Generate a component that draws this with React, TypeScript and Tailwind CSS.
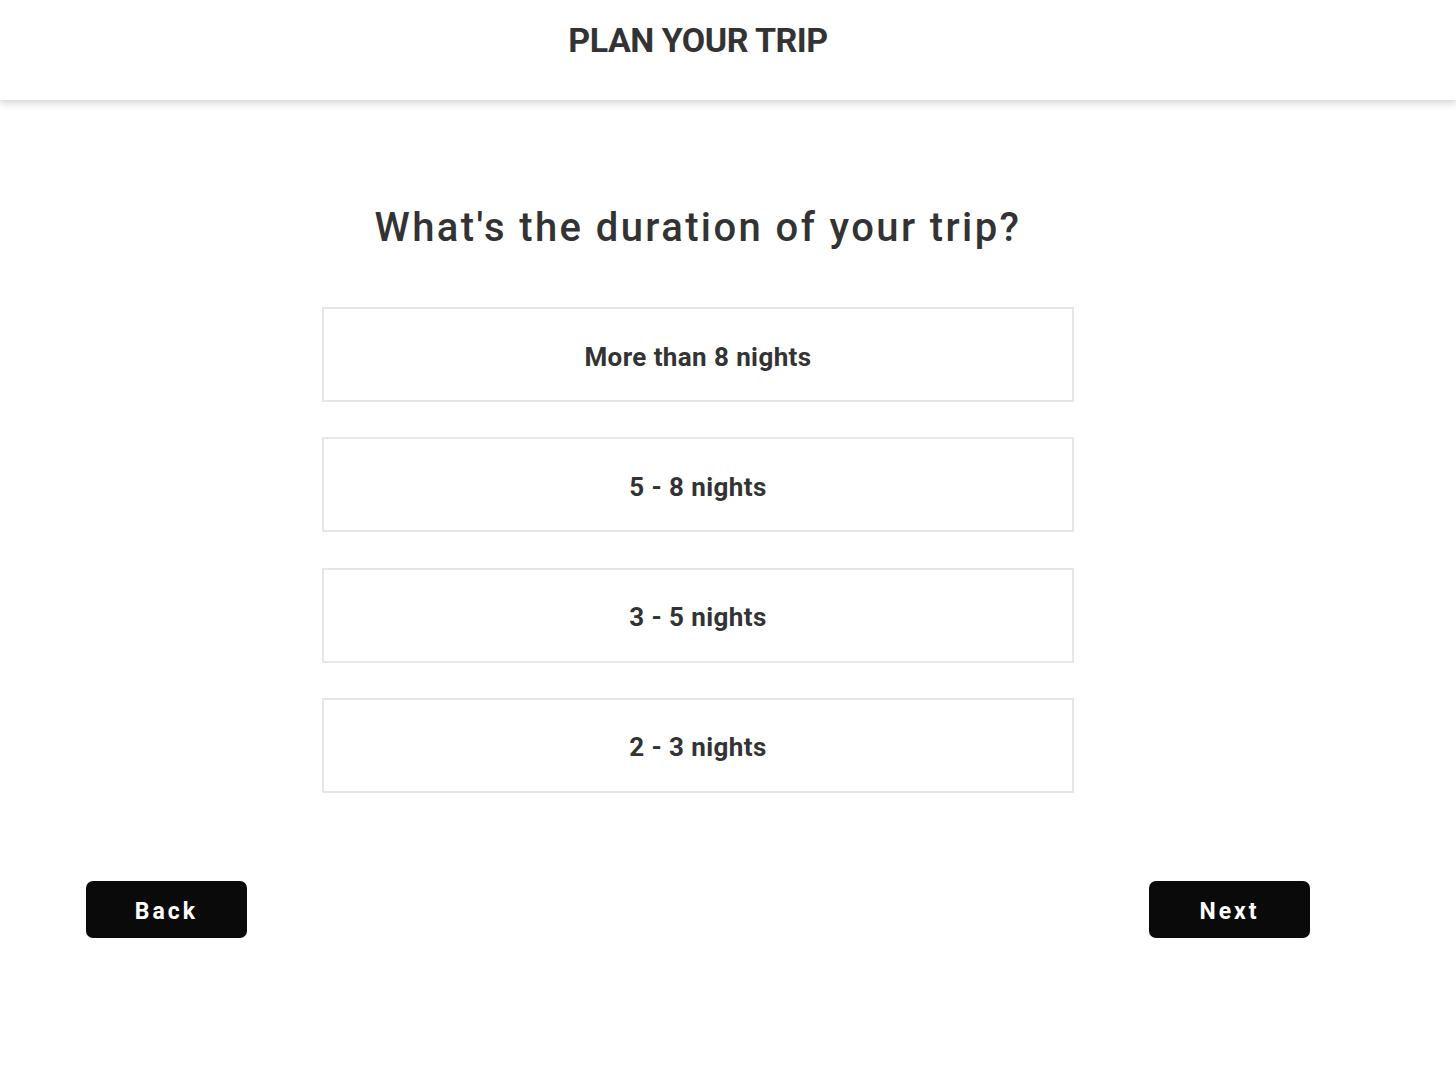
import React from "react";

const options = ["More than 8 nights", "5 - 8 nights", "3 - 5 nights", "2 - 3 nights"];

export default function App() {
  const font = { fontFamily: "Roboto, 'Liberation Sans', sans-serif" };
  return (
    <div className="min-h-[1087px] w-[1456px] bg-white text-[#333333]" style={font}>
      <header className="h-[100px] w-full bg-white shadow-[0_3px_8px_rgba(0,0,0,0.18)]">
        <div className="flex h-full w-[1396px] items-start justify-center pt-[18px]">
          <h1 className="text-[34px] font-bold leading-[44px] tracking-[-0.5px] text-[#333333]">PLAN YOUR TRIP</h1>
        </div>
      </header>
      <main className="flex w-[1396px] flex-col items-center">
        <h2 className="mt-[103px] text-[40px] font-medium leading-[50px] tracking-[2.4px] text-[#333333]">
          What's the duration of your trip?
        </h2>
        <div className="mt-[54px] flex flex-col gap-[35.3px]">
          {options.map((o) => (
            <button
              key={o}
              className="flex h-[95px] w-[752px] items-center justify-center border-2 border-[#e6e6e6] bg-white pt-[5px] text-[26px] font-bold tracking-[0.4px] text-[#333333]"
            >
              {o}
            </button>
          ))}
        </div>
        <div className="mt-[88px] flex w-full justify-between px-[86px]">
          <button className="flex h-[57px] w-[161px] items-center justify-center rounded-[7px] bg-[#0a0a0a] pt-[6px] text-[23px] font-bold tracking-[3px] text-white">
            Back
          </button>
          <button className="flex h-[57px] w-[161px] items-center justify-center rounded-[7px] bg-[#0a0a0a] pt-[6px] text-[23px] font-bold tracking-[3px] text-white">
            Next
          </button>
        </div>
      </main>
    </div>
  );
}
